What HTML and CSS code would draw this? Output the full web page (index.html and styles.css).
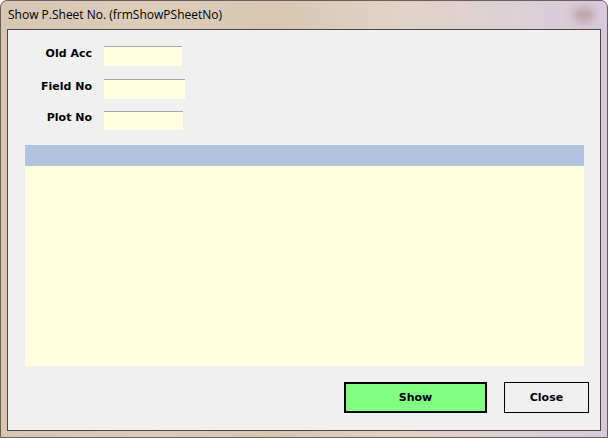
FILE: index.html
```html
<!DOCTYPE html>
<html>
<head>
<meta charset="utf-8">
<link rel="stylesheet" href="styles.css">
</head>
<body>
<div class="window">
  <div class="titlebar">
    <span class="title">Show P.Sheet No. (frmShowPSheetNo)</span>
    <span class="close-blur"></span>
  </div>
  <div class="client">
    <div class="fields">
      <div class="row r1"><label class="lbl">Old Acc</label><div class="inp w1"></div></div>
      <div class="row r2"><label class="lbl">Field No</label><div class="inp w2"></div></div>
      <div class="row r3"><label class="lbl">Plot No</label><div class="inp w3"></div></div>
    </div>
    <div class="grid">
      <div class="grid-head"></div>
      <div class="grid-body"></div>
    </div>
    <div class="buttons">
      <button class="btn show">Show</button>
      <button class="btn close">Close</button>
    </div>
  </div>
</div>
</body>
</html>
```
FILE: styles.css
```css
html, body {
  margin: 0;
  padding: 0;
  background: #ffffff;
}
.window {
  width: 608px;
  height: 438px;
  box-sizing: border-box;
  border-radius: 7px 7px 0 0;
  border: 1px solid #6b6058;
  background: linear-gradient(90deg, #d6c6b2 0%, #dccdbb 25%, #d8c6b2 45%, #e0d3c6 65%, #ddd0d6 85%, #d8c9dc 100%);
  padding: 0 6px 6px 6px;
  display: flex;
  flex-direction: column;
  font-family: "DejaVu Sans", Verdana, sans-serif;
}
.titlebar {
  height: 28px;
  position: relative;
  display: flex;
  align-items: center;
}
.title {
  font-family: "Open Sans", "Noto Sans", sans-serif;
  font-size: 12px;
  color: #000;
  margin-left: 1px;
  margin-top: -2px;
}
.close-blur {
  position: absolute;
  right: 6px;
  top: 6px;
  width: 22px;
  height: 16px;
  border-radius: 50%;
  background: #b89a98;
  filter: blur(5px);
  opacity: 0.8;
}
.client {
  flex: 1;
  border: 1px solid #4a4546;
  background: #f0f0f0;
  display: flex;
  flex-direction: column;
}
.fields {
  display: flex;
  flex-direction: column;
  margin-top: 16px;
}
.row {
  display: flex;
  align-items: center;
  height: 20px;
}
.r2 { margin-top: 13px; }
.r3 { margin-top: 12px; height: 19px; }
.lbl {
  width: 84px;
  text-align: right;
  font-weight: bold;
  font-size: 11px;
  color: #000;
  margin-right: 12px;
  margin-top: -6px;
}
.inp {
  height: 100%;
  box-sizing: border-box;
  background: #ffffe1;
  border-top: 1px solid #a8a8a8;
}
.w1 { width: 78px; }
.w2 { width: 81px; }
.w3 { width: 79px; }
.grid {
  margin: 15px 0 0 17px;
  width: 559px;
}
.grid-head {
  height: 21px;
  background: #b0c4de;
}
.grid-body {
  height: 200px;
  background: #ffffe0;
}
.buttons {
  display: flex;
  justify-content: flex-end;
  gap: 17px;
  margin: 16px 11px 0 0;
}
.btn {
  height: 31px;
  box-sizing: border-box;
  font-family: "DejaVu Sans", Verdana, sans-serif;
  font-weight: bold;
  font-size: 11px;
  color: #000;
  padding: 0 0 0 0;
  line-height: 1;
}
.show {
  width: 143px;
  background: #80ff80;
  border: 2px solid #000;
}
.close {
  width: 85px;
  background: #f0f0f0;
  border: 1px solid #000;
}
```
